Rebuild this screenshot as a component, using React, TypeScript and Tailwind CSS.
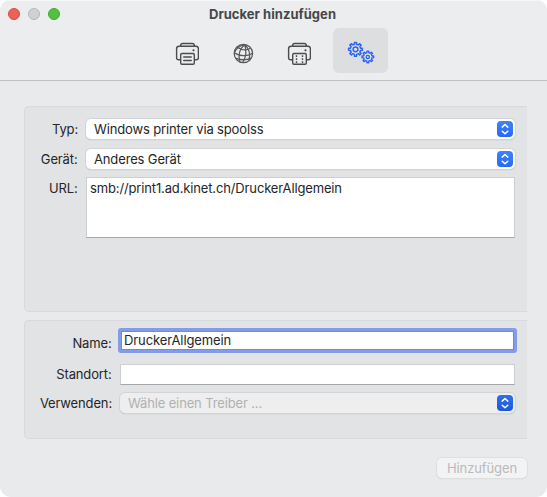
import type { ReactNode } from "react";

function gearPath(cx: number, cy: number, outer: number, inner: number, teeth: number) {
  const points: string[] = [];
  const step = (Math.PI * 2) / teeth;
  for (let i = 0; i < teeth; i++) {
    const a = i * step - Math.PI / 2;
    const corners: [number, number][] = [
      [inner, a - step * 0.27],
      [outer, a - step * 0.19],
      [outer, a + step * 0.19],
      [inner, a + step * 0.27],
    ];
    for (const [r, t] of corners) {
      points.push(`${(cx + r * Math.cos(t)).toFixed(2)} ${(cy + r * Math.sin(t)).toFixed(2)}`);
    }
  }
  return `M${points.join("L")}Z`;
}

function PrinterIcon({ film = false }: { film?: boolean }) {
  return (
    <svg width="24" height="24" viewBox="0 0 24 24" fill="none" stroke="#4b4c4e" strokeWidth="1.4" strokeLinecap="round" strokeLinejoin="round">
      <path d="M5.700 4.200V3.400q0-1.900 1.900-1.900h9.800q1.900 0 1.900 1.900v.8" />
      <path d="M5 17.700H3.600q-2 0-2-2V6.700q0-2.400 2.400-2.400h17q2.400 0 2.400 2.400v9q0 2-2 2H19.800" />
      <rect x="5.700" y="11.500" width="13.600" height="10.800" rx="1.300" />
      <circle cx="18.500" cy="8.300" r="1.100" fill="#4b4c4e" stroke="none" />
      {film ? (
        <path d="M9.500 13.300v8M15.500 13.300v8" strokeWidth="1.400" strokeDasharray="1.600 1.400" strokeLinecap="butt" />
      ) : (
        <path d="M8.700 15h7.600M8.700 18.500h7.600" strokeWidth="1.300" />
      )}
    </svg>
  );
}

function GlobeIcon() {
  return (
    <svg width="22" height="22" viewBox="0 0 22 22" fill="none" stroke="#58595b" strokeWidth="1.250">
      <circle cx="11.400" cy="10.500" r="9.200" />
      <path d="M12.700 1.500C7.500 6 6 12.500 8 19.100M12.700 1.500c2.100 6.500 1.500 12.500-2 18M12.700 1.500c4.500 4 6 9.200 4.200 16M12.700 1.500C7.500 2.800 4.800 5.300 2.600 8.800" />
      <path d="M4.900 4.100c4.200 3 9.200 3.700 13.600 1.100M2.300 9.900c5.500 3.500 12.700 3.800 18.300.3M3.600 15.200c5 2 10.600 2 15.600-.1" />
    </svg>
  );
}

function GearsIcon() {
  return (
    <svg width="30" height="26" viewBox="0 0 30 26" fill="none" stroke="#2f65ed" strokeWidth="1.500" strokeLinejoin="round">
      <path d={gearPath(9.500, 9.300, 7, 5.200, 8)} />
      <circle cx="9.500" cy="9.300" r="2.400" />
      <path d={gearPath(21.800, 16.900, 5.900, 4.300, 8)} strokeWidth="1.350" />
      <circle cx="21.800" cy="16.900" r="1.600" strokeWidth="1.350" />
    </svg>
  );
}

function Stepper({ dim = false }: { dim?: boolean }) {
  return (
    <span className={`flex h-4 w-4 items-center justify-center rounded-[4px] bg-linear-to-b ${dim ? "from-[#2f6fe9] to-[#1c59df]" : "from-[#4083fb] to-[#2769f5]"}`}>
      <svg width="16" height="16" viewBox="0 0 16 16" fill="none" stroke="white" strokeWidth="1.500" strokeLinecap="round" strokeLinejoin="round">
        <path d="M5.200 6.100 8 3.500l2.800 2.600M5.200 10.200 8 12.800l2.800-2.600" />
      </svg>
    </span>
  );
}

function Popup({ children, dim = false }: { children: ReactNode; dim?: boolean }) {
  return (
    <div className={`flex h-5 flex-1 items-center justify-between rounded-[5px] pr-[2px] pl-2 shadow-[0_0_0_1px_#d3d4d5,0_1px_1px_#999a9b] ${dim ? "bg-[#eeeeee] text-[#b1b1b2]" : "bg-white"}`}>
      {children}
      <Stepper dim={dim} />
    </div>
  );
}

export default function App() {
  return (
    <div className="h-[497px] w-[547px] overflow-hidden bg-white font-['Inter','Liberation_Sans',sans-serif] text-[13px] leading-4 tracking-[-0.14px] whitespace-nowrap text-[#252627]">
      <main className="h-full overflow-hidden rounded-[11px] bg-[#e9eaec]">
        <header className="h-[81px] border-t border-b border-t-[#f5f6f7] border-b-[#bebfc1] bg-[#ecedef]">
          <div className="grid h-[27px] grid-cols-[80px_1fr_82px] pt-[5px]">
            <div className="flex gap-2 pt-[2px] pl-2">
              <span className="h-3 w-3 rounded-full border border-[#d94c40] bg-[#ed6256]" />
              <span className="h-3 w-3 rounded-full border border-[#b5b6b8] bg-[#d0d1d3]" />
              <span className="h-3 w-3 rounded-full border border-[#43a831] bg-[#54c043]" />
            </div>
            <h1 className="text-center font-bold tracking-[0.04px] text-[#464749]">Drucker hinzufügen</h1>
          </div>
          <nav className="flex pl-[165px]">
            <button className="flex h-[45px] w-11 items-center justify-center pt-[6px]"><PrinterIcon /></button>
            <button className="ml-3 flex h-[45px] w-11 items-center justify-center pt-[6px]"><GlobeIcon /></button>
            <button className="ml-3 flex h-[45px] w-11 items-center justify-center pt-[6px]"><PrinterIcon film /></button>
            <button className="ml-3 flex h-[45px] w-[55px] items-center justify-center rounded-[6px] bg-[#dddedf] pt-[4px]"><GearsIcon /></button>
          </nav>
        </header>

        <section className="mt-[25px] mr-5 ml-6 h-[206px] rounded-l-[5px] border border-r-0 border-[#d8d9db] bg-[#e2e3e5] pt-3 pr-3">
          <div className="flex h-5 items-center">
            <label className="w-[53px] text-right">Typ:</label>
            <div className="ml-2 flex flex-1"><Popup>Windows printer via spoolss</Popup></div>
          </div>
          <div className="mt-[10px] flex h-5 items-center">
            <label className="w-[53px] pr-[0.5px] text-right">Gerät:</label>
            <div className="ml-2 flex flex-1"><Popup>Anderes Gerät</Popup></div>
          </div>
          <div className="mt-2 flex h-[61px]">
            <label className="w-[53px] pt-[3px] pr-[0.5px] text-right">URL:</label>
            <div className="ml-2 flex-1 border border-[#cdced0] border-b-[#a5a6a8] bg-white pt-[2px] pl-[3px]">smb://print1.ad.kinet.ch/DruckerAllgemein</div>
          </div>
        </section>

        <section className="mt-2 mr-5 ml-6 h-[119px] rounded-l-[5px] border border-r-0 border-[#d8d9db] bg-[#e2e3e5] pt-[7px] pr-[10px]">
          <div className="flex h-[25px]">
            <label className="w-[87px] pt-[7px] pr-[0.5px] text-right">Name:</label>
            <div className="ml-[6px] flex-1 rounded-[3px] border-3 border-[#839ce8] bg-white pt-[1px] pl-[3px] tracking-[-0.1px] shadow-[inset_0_0_0_1px_#718bd7]">DruckerAllgemein</div>
          </div>
          <div className="mt-[11px] mr-[2px] flex h-[21px]">
            <label className="w-[87px] pt-[2px] pr-[0.5px] text-right">Standort:</label>
            <div className="ml-2 flex-1 border border-[#cdced0] border-b-[#a5a6a8] bg-white" />
          </div>
          <div className="mt-2 mr-[2px] flex h-5 items-center">
            <label className="w-[87px] text-right">Verwenden:</label>
            <div className="ml-2 flex flex-1"><Popup dim>Wähle einen Treiber ...</Popup></div>
          </div>
        </section>

        <footer className="mt-[19px] mr-5 flex justify-end">
          <button className="h-5 w-[90px] rounded-[5px] bg-[#f3f3f4] tracking-[-0.1px] text-[#b9babb] shadow-[0_0_0_1px_#dedfe0,0_1px_1px_#c2c3c4]">Hinzufügen</button>
        </footer>
      </main>
    </div>
  );
}
